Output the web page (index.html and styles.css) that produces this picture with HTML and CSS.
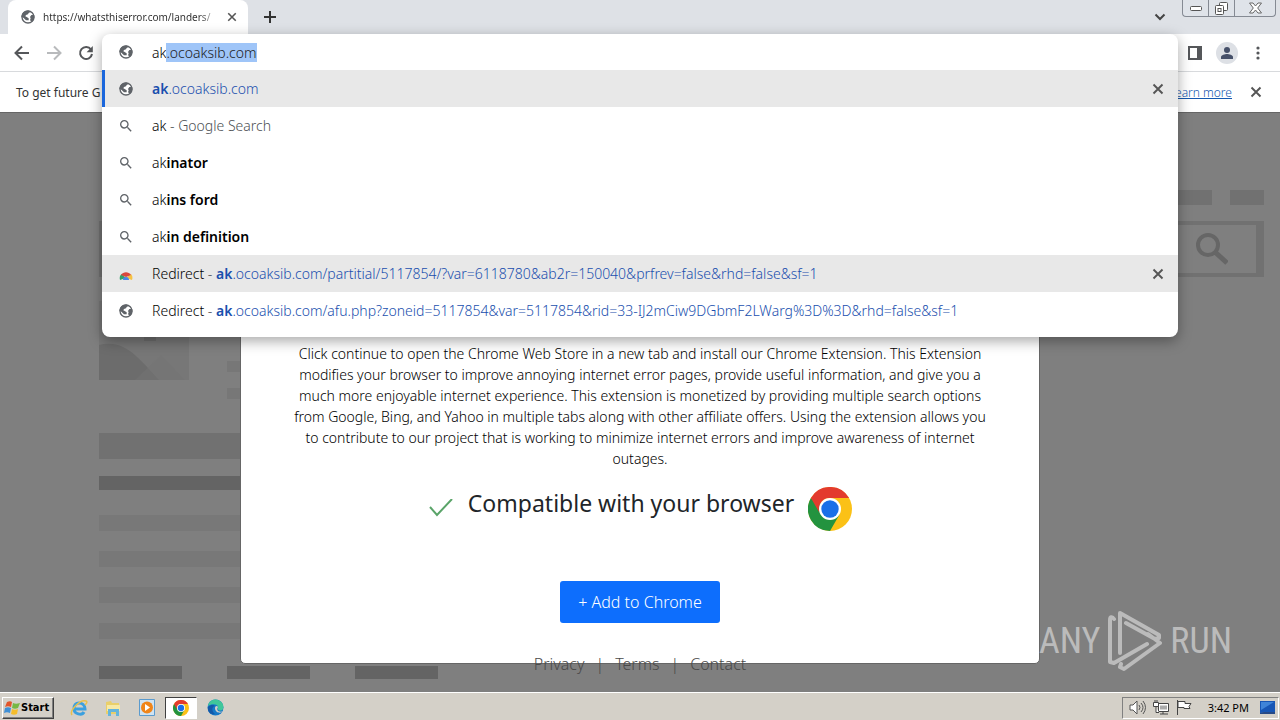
FILE: index.html
```
<!DOCTYPE html>
<html lang="en">
<head>
<meta charset="utf-8">
<title>Browser window</title>
<link rel="stylesheet" href="styles.css">
</head>
<body>
<svg class="defs" width="0" height="0" aria-hidden="true">
  <symbol id="globe" viewBox="0 0 24 24"><circle cx="12" cy="12" r="9" fill="#fff" stroke="currentColor" stroke-width="2"/><path fill="currentColor" d="M14 2.500C8 1 2 5.500 2 12l3 1 4 4h4v-3l-3-2-2-1 1-2 3-1 1-2 2-1zM15 12l2-3 4.500 0c1 5-1 8-3.500 10l-3-2 1-3z"/></symbol>
  <symbol id="search" viewBox="0 0 24 24"><path fill="currentColor" d="M15.500 14h-.79l-.28-.27A6.470 6.470 0 0 0 16 9.500 6.500 6.500 0 1 0 9.500 16c1.610 0 3.090-.59 4.230-1.570l.27.28v.79l5 4.990L20.490 19l-4.990-5zm-6 0C7.010 14 5 11.990 5 9.500S7.010 5 9.500 5 14 7.010 14 9.500 11.990 14 9.500 14z"/></symbol>
  <symbol id="close" viewBox="0 0 12 12"><path d="M1.500 1.500l9 9M10.500 1.500l-9 9" stroke="currentColor" stroke-width="1.900" fill="none"/></symbol>
  <symbol id="chrome" viewBox="0 0 48 48"><circle cx="24" cy="24" r="24" fill="#fbc116"/><path d="M24 24L3.200 12A24 24 0 0 0 24 48L34.400 30z" fill="#23933f"/><path d="M24 12H44.800A24 24 0 0 0 3.200 12L13.600 30A12 12 0 0 1 24 12z" fill="#e33b2e"/><circle cx="24" cy="24" r="12" fill="#fff"/><circle cx="24" cy="24" r="9.500" fill="#1a6fe8"/></symbol>
</svg>

<header class="browser">
  <div class="tabs">
    <div class="tab">
      <svg class="ico16"><use href="#globe"/></svg>
      <span class="tab-title">https://whatsthiserror.com/landers/</span>
      <button class="plain" aria-label="Close tab"><svg class="ico10"><use href="#close"/></svg></button>
    </div>
    <button class="plain new-tab" aria-label="New tab"><svg width="12" height="12" viewBox="0 0 12 12"><path d="M6 0v12M0 6h12" stroke="#333" stroke-width="2"/></svg></button>
    <button class="plain tab-search" aria-label="Search tabs"><svg width="12" height="8" viewBox="0 0 12 8"><path d="M1.500 1.500L6 6l4.500-4.500" fill="none" stroke="#444" stroke-width="2"/></svg></button>
    <div class="window-controls">
      <button aria-label="Minimize"><svg width="12" height="5"><rect x=".5" y=".5" width="11" height="4" rx="1" fill="#fff" stroke="#555"/></svg></button>
      <button aria-label="Restore"><svg width="13" height="13" fill="#fff" stroke="#555"><rect x="4.500" y=".5" width="8" height="8" rx="1"/><rect x=".5" y="3.500" width="8" height="9" rx="1"/><rect x="3" y="6.500" width="3" height="3"/></svg></button>
      <button class="wide" aria-label="Close window"><svg width="13" height="12" viewBox="0 0 13 12"><path d="M.5 1h3.500l2.500 3L9 1h3.500L8.700 6l3.800 5H9L6.500 8 4 11H.5l3.800-5z" fill="#fff" stroke="#666"/></svg></button>
    </div>
  </div>
  <div class="toolbar">
    <button class="plain" aria-label="Back"><svg width="16" height="16" viewBox="0 0 16 16"><path d="M15 8H2M8 1.500L1.500 8 8 14.500" fill="none" stroke="#55575a" stroke-width="2"/></svg></button>
    <button class="plain" aria-label="Forward"><svg width="16" height="16" viewBox="0 0 16 16"><path d="M1 8h13M8 1.500L14.500 8 8 14.500" fill="none" stroke="#b8babc" stroke-width="2"/></svg></button>
    <button class="plain" aria-label="Reload"><svg width="16" height="16" viewBox="0 0 16 16"><path d="M13 4.500A6 6 0 1 0 14 9" fill="none" stroke="#55575a" stroke-width="2"/><path d="M14.800 1v6.200H8.600z" fill="#55575a"/></svg></button>
    <div class="toolbar-end">
      <button class="plain" aria-label="Side panel"><svg width="14" height="14"><rect x="1" y="1" width="12" height="12" fill="#fff" stroke="#55575a" stroke-width="2"/><path d="M9 1h4v12H9z" fill="#55575a"/></svg></button>
      <button class="plain avatar" aria-label="Profile"><svg width="14" height="14"><circle cx="7" cy="4" r="3" fill="#465069"/><path d="M1 13v-2c0-2 4-3 6-3s6 1 6 3v2z" fill="#465069"/></svg></button>
      <button class="plain" aria-label="Menu"><svg width="4" height="14" fill="#55575a"><circle cx="2" cy="2" r="1.600"/><circle cx="2" cy="7" r="1.600"/><circle cx="2" cy="12" r="1.600"/></svg></button>
    </div>
  </div>
  <div class="infobar">
    <span>To get future G</span>
    <a class="learn" href="#">Learn more</a>
    <button class="plain" aria-label="Dismiss"><svg class="ico12"><use href="#close"/></svg></button>
  </div>

  <div class="omnibox">
    <div class="row entry">
      <svg class="ico16"><use href="#globe"/></svg>
      <input id="address" type="text" value="ak.ocoaksib.com" aria-label="Address" autofocus>
    </div>
    <div class="row active">
      <svg class="ico16"><use href="#globe"/></svg>
      <span class="url"><b>ak</b>.ocoaksib.com</span>
      <button class="plain remove" aria-label="Remove"><svg class="ico12"><use href="#close"/></svg></button>
    </div>
    <div class="row"><svg class="ico16"><use href="#search"/></svg><span>ak<span class="dim"> - Google Search</span></span></div>
    <div class="row"><svg class="ico16"><use href="#search"/></svg><span>ak<b>inator</b></span></div>
    <div class="row"><svg class="ico16"><use href="#search"/></svg><span>ak<b>ins ford</b></span></div>
    <div class="row"><svg class="ico16"><use href="#search"/></svg><span>ak<b>in definition</b></span></div>
    <div class="row hover">
      <svg class="ico16" viewBox="0 0 16 16"><path d="M2 14a6 6 0 0 1 1.500-6l4.500 4z" fill="#34a06a"/><path d="M14 14a6 6 0 0 0-1-6l-5 4z" fill="#f6c344"/><path d="M3 9A6 6 0 0 1 13 9L8 11z" fill="#d9473c"/><path d="M5 14a3 3 0 0 1 6 0z" fill="#4a86e8"/></svg>
      <span>Redirect<span class="dim"> - </span><span class="url"><b>ak</b>.ocoaksib.com/partitial/5117854/?var=6118780&amp;ab2r=150040&amp;prfrev=false&amp;rhd=false&amp;sf=1</span></span>
      <button class="plain remove" aria-label="Remove"><svg class="ico12"><use href="#close"/></svg></button>
    </div>
    <div class="row">
      <svg class="ico16"><use href="#globe"/></svg>
      <span>Redirect<span class="dim"> - </span><span class="url"><b>ak</b>.ocoaksib.com/afu.php?zoneid=5117854&amp;var=5117854&amp;rid=33-IJ2mCiw9DGbmF2LWarg%3D%3D&amp;rhd=false&amp;sf=1</span></span>
    </div>
  </div>
</header>

<main class="page">
  <div class="skeleton" aria-hidden="true">
    <div class="nav"><i></i><i></i></div>
    <div class="searchbox"><svg width="32" height="32" viewBox="0 0 32 32" fill="none" stroke="#666"><circle cx="12" cy="12" r="10" stroke-width="4"/><path d="M19 19l12 11" stroke-width="5"/></svg></div>
    <div class="media">
      <svg width="90" height="79" viewBox="0 0 90 79"><path fill="#777" d="M0 0h90v79H0z"/><path fill="#6c6c6c" d="M0 44C25 38 38 55 60 79H0zM45 0h12v40H45z"/><path fill="#737373" d="M36 79l26-25 24 25z" opacity=".5"/></svg>
      <div class="lines"><i></i><i></i></div>
    </div>
    <div class="bar title"></div>
    <div class="bar dark"></div>
    <div class="bar light"></div>
    <div class="bar light"></div>
    <div class="bar light"></div>
    <div class="bar light"></div>
    <div class="chips"><i></i><i></i><i></i></div>
  </div>
  <section class="modal">
    <p>Click continue to open the Chrome Web Store in a new tab and install our Chrome Extension. This Extension modifies your browser to improve annoying internet error pages, provide useful information, and give you a much more enjoyable internet experience. This extension is monetized by providing multiple search options from Google, Bing, and Yahoo in multiple tabs along with other affiliate offers. Using the extension allows you to contribute to our project that is working to minimize internet errors and improve awareness of internet outages.</p>
    <div class="compat">
      <svg width="26" height="20" viewBox="0 0 26 20"><path d="M2 8l7 8L24 0" fill="none" stroke="#5aa469" stroke-width="2"/></svg>
      <h1>Compatible with your browser</h1>
      <svg width="44" height="44"><use href="#chrome"/></svg>
    </div>
    <button class="add">+ Add to Chrome</button>
  </section>
  <nav class="links"><a href="#">Privacy</a><span>|</span><a href="#">Terms</a><span>|</span><a href="#">Contact</a></nav>
  <div class="watermark">
    <span>ANY</span>
    <svg width="54" height="62" viewBox="0 0 54 62" fill="none" stroke="#bbb" stroke-width="4" stroke-linejoin="round" stroke-linecap="round"><path d="M6 9C4 6 2 7 2 10v42l4 1 33-19M12 43V3l39 22v3l-4 1-29-16M40 24l12 9L16 59l-4-2 1-3"/></svg>
    <span>RUN</span>
  </div>
</main>

<footer class="taskbar">
  <button class="start"><svg width="17" height="16" viewBox="0 0 17 16"><path d="M3 2c2-1 4-1 5 0L7 7c-2-1-4-1-6 0z" fill="#e2552b"/><path d="M9 3c2 1 4 1 7 0l-2 5c-2 1-4 1-6 0z" fill="#77b843"/><path d="M1 8c2-1 4-1 6 0l-1 5c-2-1-4-1-6 0z" fill="#3f8fd6"/><path d="M8 9c2 1 4 1 6 0l-1 5c-2 1-4 1-6 0z" fill="#f5bd2c"/></svg>Start</button>
  <div class="launch">
    <button class="plain" aria-label="Internet Explorer"><svg width="18" height="18" viewBox="0 0 18 18" fill="none"><path d="M4 10h11c0-4-3-6-6-6s-5 2-5 6c0 5 8 7 10 3" stroke="#3ba0df" stroke-width="3"/><path d="M2 16C-1 12 10 0 16 2c2 1 0 3-1 4" stroke="#e8c04c" stroke-width="1.500"/></svg></button>
    <button class="plain" aria-label="Explorer"><svg width="18" height="18" viewBox="0 0 18 18"><path d="M2 3l5-1 1 2h7v11H2z" fill="#e9cf6a"/><path d="M3 6h13v6H3z" fill="#f7e9a5"/><path d="M4 10h11v7h-3v-4H7v4H4z" fill="#65b5dc"/></svg></button>
    <button class="plain" aria-label="Media Player"><svg width="16" height="17" viewBox="0 0 16 17"><path d="M.5.500h15v16H.5z" fill="#cfe3f2" stroke="#5b9bce"/><circle cx="8" cy="8.500" r="6" fill="#f08519"/><path d="M6 5l5 3.500L6 12z" fill="#fff"/></svg></button>
    <button class="plain current" aria-label="Chrome"><svg width="16" height="16"><use href="#chrome"/></svg></button>
    <button class="plain" aria-label="Edge"><svg width="17" height="17" viewBox="0 0 17 17"><circle cx="8.500" cy="8.500" r="8" fill="#1678c8"/><path d="M1 7C2 1 8-1 13 2c3 2 4 5 3 8-2 3-6 1-5-1 1-4-6-5-10-2z" fill="#40c79a"/><path d="M8 9c0-2 2-3 3-1-1 1-1 3 0 4 2 1 4 1 5 0-2 3-8 2-8-3z" fill="#d4d0c8"/><path d="M1 8c3-3 6-2 7-1-4 1-3 6 0 8-4 1-8-2-7-7z" fill="#1459a8"/></svg></button>
  </div>
  <div class="tray">
    <svg width="17" height="15" viewBox="0 0 17 15" fill="#fff" stroke="#555"><path d="M1 5h3l4-4v13l-4-4H1z"/><path d="M10 5q2 2.500 0 5M12 3q4 4.500 0 9M14 1q5 6.500 0 13" fill="none"/></svg>
    <svg width="16" height="15" viewBox="0 0 16 15" fill="#fff" stroke="#444"><path d="M5.500 3.500h10v8h-10z"/><path d="M7 5.500h7v4H7z" fill="#aaa" stroke="none"/><path d="M.5 2.500h5v4h-5zM2 0v2M4 0v2M3 7v5.500h3M7 14h8M10 12v2"/></svg>
    <svg width="17" height="15" viewBox="0 0 17 15" fill="#fff" stroke="#444"><path d="M1.500 0v15M2 1.500h7v2h6l-2 3 1 2H8v-1H2z"/></svg>
    <time>3:42 PM</time>
    <svg width="15" height="13" viewBox="0 0 15 13"><path d="M0 0h15v11l-15 1z" fill="#1756b5"/><path d="M1 1h13L1 9z" fill="#3f84d8"/><path d="M0 12l4-1h11v2H0z" fill="#274a86"/></svg>
  </div>
</footer>
<script src="main.js"></script>
</body>
</html>
```
FILE: styles.css
```
* { box-sizing: border-box; }
body {
  margin: 0;
  min-height: 100vh;
  display: flex;
  flex-direction: column;
  position: relative;
  overflow: hidden;
  font-family: "Noto Sans", "Open Sans", sans-serif;
  font-size: 14px;
  font-weight: 300;
  color: #000;
}
b { font-weight: 600; }
svg { display: block; flex: none; }
.defs { position: absolute; }
button { font: inherit; cursor: pointer; }
.plain { display: grid; place-items: center; padding: 0; border: 0; background: none; color: #555; }
.ico16 { width: 16px; height: 16px; color: #5f6368; }
.ico12 { width: 12px; height: 12px; }
.ico10 { width: 10px; height: 10px; }

.tabs { display: flex; height: 34px; background: #dee1e6; padding-left: 8px; }
.tab { display: flex; align-items: center; width: 240px; gap: 7px; padding: 0 11px 0 12px; background: #fff; border-radius: 8px 8px 0 0; }
.tab-title { flex: 1; white-space: nowrap; font-size: 10px; font-weight: 400; color: #333; mask-image: linear-gradient(90deg, #000 88%, transparent); }
.new-tab { width: 44px; }
.tab-search { margin-left: auto; width: 44px; }
.window-controls { display: flex; align-items: flex-start; padding-right: 4px; }
.window-controls button { display: grid; place-items: center; width: 26px; height: 17px; padding: 0; border: 1px solid #858a93; border-width: 0 0 1px 1px; background: #dfe3e9; }
.window-controls button:first-child { border-radius: 0 0 0 4px; }
.window-controls .wide { width: 42px; border-right-width: 1px; border-radius: 0 0 4px 0; }

.toolbar { display: flex; align-items: center; gap: 16px; height: 38px; padding: 0 20px 0 14px; background: #fff; border-bottom: 1px solid #d8dadd; }
.toolbar-end { display: flex; align-items: center; gap: 14px; margin-left: auto; }
.toolbar-end .plain:last-child { margin-left: 4px; }
.avatar { width: 22px; height: 22px; border-radius: 50%; background: #dde0e5; }

.infobar { display: flex; align-items: center; height: 40px; padding: 0 18px 0 16px; background: #fff; font-size: 12px; font-weight: 400; color: #333; }
.learn { margin: 0 18px 0 auto; color: #1558b0; font-weight: 300; text-decoration: underline; }

.omnibox { position: absolute; z-index: 5; top: 34px; left: 102px; right: 102px; padding-bottom: 8px; background: #fff; border-radius: 8px; box-shadow: 0 4px 14px rgba(0, 0, 0, .35); }
.row { display: flex; align-items: center; gap: 18px; height: 37px; padding: 0 14px 0 16px; white-space: nowrap; }
.entry { height: 36px; }
.entry input { flex: 1; padding: 0; border: 0; outline: 0; background: none; font: inherit; color: inherit; }
.entry input::selection { background: #9fc5f8; color: #202124; }
.active, .hover { background: #e8e8e8; }
.active { box-shadow: inset 3px 0 #1a66dc; }
.url { color: #1a4fae; }
.dim { color: #4c5054; }
.remove { margin-left: auto; }

.page { position: relative; flex: 1; display: flex; flex-direction: column; align-items: center; justify-content: flex-end; padding-bottom: 28px; background: #7f7f7f; border-top: 1px solid #666; }
.skeleton { position: absolute; inset: 0; padding: 77px 16px 0 99px; overflow: hidden; }
.skeleton i { display: block; background: #717171; }
.nav { display: flex; justify-content: flex-end; gap: 18px; }
.nav i { width: 34px; height: 15px; }
.nav i:first-child { width: 52px; }
.searchbox { display: flex; align-items: center; justify-content: flex-end; height: 56px; margin-top: 16px; padding-right: 28px; border: 4px solid #717171; border-right-width: 8px; }
.media { display: flex; gap: 38px; margin-top: 24px; }
.lines { display: flex; flex-direction: column; gap: 16px; padding-top: 60px; }
.lines i { width: 120px; height: 11px; background: #777; }
.bar { width: 60%; }
.title { height: 26px; margin-top: 34px; background: #717171; }
.dark { height: 14px; margin: 17px 0 25px; background: #646464; }
.light { height: 16px; margin-bottom: 20px; background: #787878; }
.chips { display: flex; gap: 45px; padding-top: 7px; }
.chips i { width: 83px; height: 13px; background: #646464; }

.modal { position: relative; display: flex; flex-direction: column; align-items: center; width: 100%; max-width: 800px; padding: 120px 48px 40px; background: #fff; border: 1px solid #666; border-radius: 5px; text-align: center; }
.modal p { margin: 0; line-height: 21px; }
.compat { display: flex; align-items: center; gap: 14px; margin: 18px 0 50px; }
.compat h1 { margin: 0 0 12px; font-size: 23px; line-height: 30px; font-weight: 400; color: #212529; }
.add { height: 42px; width: 160px; border: 0; border-radius: 3px; background: #0d6efd; color: #fff; font-size: 16px; }
.links { position: absolute; bottom: 16px; display: flex; gap: 11px; font-size: 16px; line-height: 24px; color: #4a4a4a; }
.links a { color: inherit; text-decoration: none; }
.watermark { position: absolute; right: 48px; bottom: 20px; display: flex; align-items: center; gap: 8px; color: #bbb; font-family: "Roboto Condensed", "Liberation Sans Narrow", Roboto, sans-serif; font-size: 36px; line-height: 40px; font-weight: 400; }

.taskbar { position: relative; display: flex; align-items: center; height: 28px; padding: 2px 1px 0 2px; background: #d4d0c8; border-top: 1px solid #fff; }
.start { display: flex; align-items: center; gap: 0; width: 52px; height: 22px; padding: 0 1px; border: 1px solid; border-color: #fff #404040 #404040 #fff; box-shadow: inset -1px -1px #808080; background: #d4d0c8; font: 700 11px "DejaVu Sans Condensed", "DejaVu Sans", sans-serif; color: #000; }
.launch { display: flex; align-items: center; margin-left: 8px; }
.launch .plain { width: 34px; height: 22px; }
.launch .current { width: 32px; margin: 0 1px; background: #fff; border: 1px solid; border-color: #404040 #fff #fff #404040; }
.tray { display: flex; align-items: center; gap: 7px; height: 22px; margin-left: auto; padding: 0 3px 0 6px; border: 1px solid; border-color: #808080 #fff #fff #808080; }
.tray time { margin: 0 4px 0 8px; font: 11px "Noto Sans", sans-serif; color: #000; }
```
FILE: main.js
```
const address = document.getElementById("address");
address.focus();
address.setSelectionRange(2, address.value.length);
```
